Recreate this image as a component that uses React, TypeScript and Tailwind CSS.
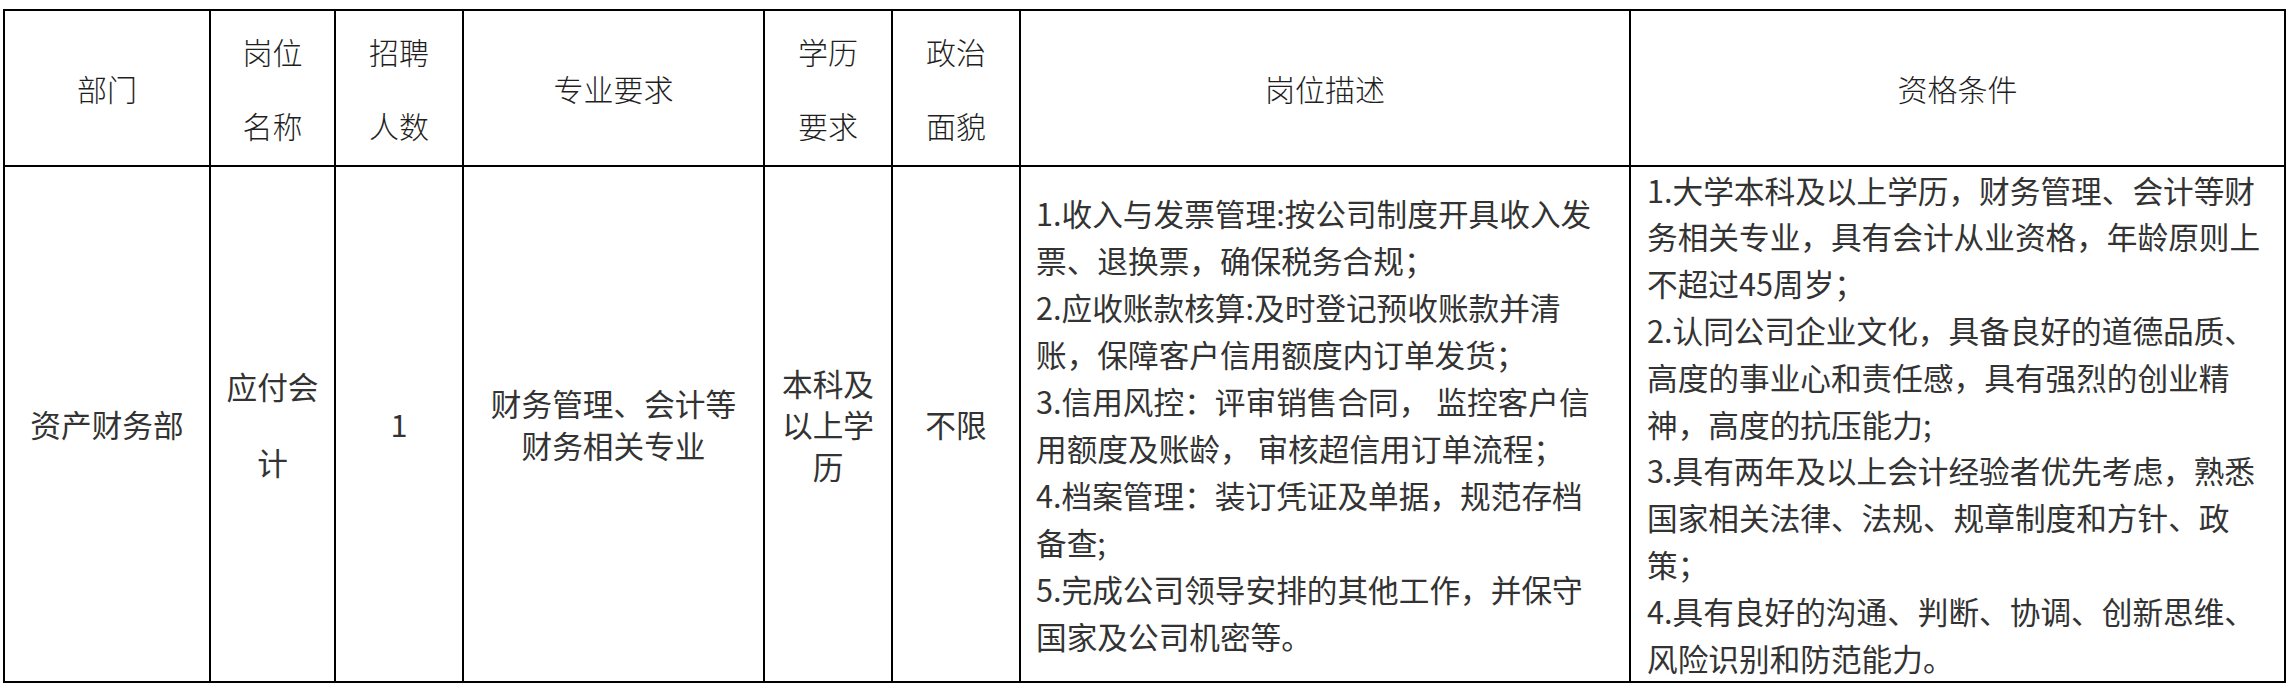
import React from "react";

const body = "font-['Noto_Sans_CJK_SC','Noto_Sans',sans-serif]";
const head = "font-['Noto_Sans_CJK_SC','Noto_Sans',sans-serif]";

const cell = "border-r-2 border-b-2 border-black flex items-center justify-center text-center";
const hcell = `${cell} ${head} text-[30px] font-light text-[#1f1f1f]`;
const bcell = `${cell} ${body} text-[30.67px] text-[#333]`;

const desc = [
  "1.收入与发票管理:按公司制度开具收入发",
  "票、退换票，确保税务合规；",
  "2.应收账款核算:及时登记预收账款并清",
  "账，保障客户信用额度内订单发货；",
  "3.信用风控：评审销售合同， 监控客户信",
  "用额度及账龄， 审核超信用订单流程；",
  "4.档案管理：装订凭证及单据，规范存档",
  "备查;",
  "5.完成公司领导安排的其他工作，并保守",
  "国家及公司机密等。",
];

const quals = [
  "1.大学本科及以上学历，财务管理、会计等财",
  "务相关专业，具有会计从业资格，年龄原则上",
  "不超过45周岁；",
  "2.认同公司企业文化，具备良好的道德品质、",
  "高度的事业心和责任感，具有强烈的创业精",
  "神，高度的抗压能力;",
  "3.具有两年及以上会计经验者优先考虑，熟悉",
  "国家相关法律、法规、规章制度和方针、政",
  "策；",
  "4.具有良好的沟通、判断、协调、创新思维、",
  "风险识别和防范能力。",
];

function Lines({ lines, className }: { lines: string[]; className: string }) {
  return (
    <div className={className}>
      {lines.map((l, i) => (
        <div key={i} className="whitespace-pre">
          {l}
        </div>
      ))}
    </div>
  );
}

export default function App() {
  return (
    <div className="w-[2293px] h-[695px] bg-white pl-[3px] pt-[9px]">
      <div className="grid w-max grid-cols-[206px_125px_128px_301px_128px_128px_610px_655px] grid-rows-[156px_516px] border-l-2 border-t-2 border-black">
        {/* header row */}
        <div className={hcell}>部门</div>
        <div className={hcell}>
          <Lines lines={["岗位", "名称"]} className="leading-[74px]" />
        </div>
        <div className={hcell}>
          <Lines lines={["招聘", "人数"]} className="leading-[74px]" />
        </div>
        <div className={hcell}>专业要求</div>
        <div className={hcell}>
          <Lines lines={["学历", "要求"]} className="leading-[74px]" />
        </div>
        <div className={hcell}>
          <Lines lines={["政治", "面貌"]} className="leading-[74px]" />
        </div>
        <div className={hcell}>岗位描述</div>
        <div className={hcell}>资格条件</div>

        {/* body row */}
        <div className={bcell}>资产财务部</div>
        <div className={bcell}>
          <Lines lines={["应付会", "计"]} className="leading-[76px]" />
        </div>
        <div className={bcell}>1</div>
        <div className={bcell}>
          <Lines lines={["财务管理、会计等", "财务相关专业"]} className="leading-[41.6px]" />
        </div>
        <div className={bcell}>
          <Lines lines={["本科及", "以上学", "历"]} className="leading-[41.6px]" />
        </div>
        <div className={bcell}>不限</div>
        <div className={`border-r-2 border-b-2 border-black flex items-center pl-[15px] ${body} text-[30.67px] text-[#333]`}>
          <Lines lines={desc} className="leading-[47px] text-left" />
        </div>
        <div className={`border-r-2 border-b-2 border-black flex items-center pl-[16px] ${body} text-[30.67px] text-[#333]`}>
          <Lines lines={quals} className="leading-[46.8px] text-left" />
        </div>
      </div>
    </div>
  );
}
